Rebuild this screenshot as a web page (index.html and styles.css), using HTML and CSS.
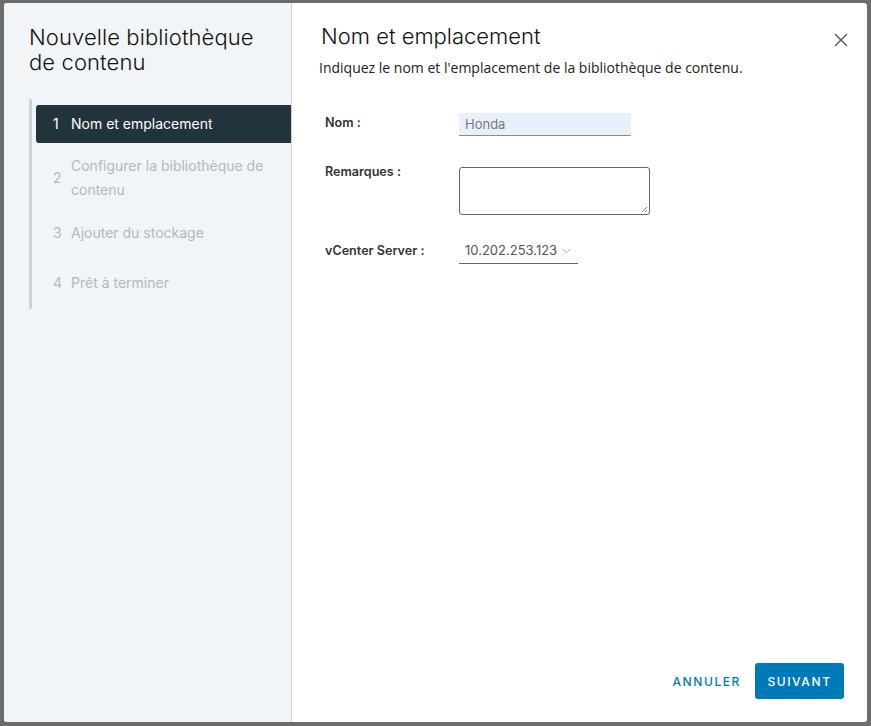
FILE: index.html
```html
<!DOCTYPE html>
<html lang="fr">
<head>
<meta charset="utf-8">
<title>Nouvelle bibliothèque de contenu</title>
<link rel="stylesheet" href="styles.css">
</head>
<body>
<div class="backdrop">
  <div class="modal">
    <aside class="side">
      <h1 class="side-title">Nouvelle bibliothèque de contenu</h1>
      <ol class="steps">
        <li class="step active"><span class="num">1</span><span class="lbl">Nom et emplacement</span></li>
        <li class="step multi"><span class="num">2</span><span class="lbl">Configurer la bibliothèque de contenu</span></li>
        <li class="step"><span class="num">3</span><span class="lbl">Ajouter du stockage</span></li>
        <li class="step last"><span class="num">4</span><span class="lbl">Prêt à terminer</span></li>
      </ol>
    </aside>
    <section class="main">
      <header class="head">
        <h2 class="title">Nom et emplacement</h2>
        <button class="close" aria-label="Fermer">
          <svg width="14" height="14" viewBox="0 0 14 14"><path d="M1 1 L13 13 M13 1 L1 13" stroke="#565656" stroke-width="1.4" fill="none"/></svg>
        </button>
      </header>
      <p class="desc">Indiquez le nom et l'emplacement de la bibliothèque de contenu.</p>
      <form class="form">
        <div class="row row-name">
          <label class="label">Nom :</label>
          <div class="input">Honda</div>
        </div>
        <div class="row row-notes">
          <label class="label">Remarques :</label>
          <div class="textarea">
            <svg class="grip" width="7" height="7" viewBox="0 0 7 7"><path d="M6 1 L1 6 M6 4 L4 6" stroke="#777" stroke-width="1"/></svg>
          </div>
        </div>
        <div class="row row-vc">
          <label class="label">vCenter Server :</label>
          <div class="select"><span>10.202.253.123</span>
            <svg width="9" height="6" viewBox="0 0 9 6"><path d="M0.5 0.8 L4.5 4.8 L8.5 0.8" stroke="#a3a3a3" stroke-width="1" fill="none"/></svg>
          </div>
        </div>
      </form>
      <footer class="foot">
        <button class="btn btn-link">ANNULER</button>
        <button class="btn btn-primary">SUIVANT</button>
      </footer>
    </section>
  </div>
</div>
</body>
</html>
```
FILE: styles.css
```css
* { box-sizing: border-box; }
html, body { margin: 0; padding: 0; }
body {
  background: #6c6c6c;
  font-family: Inter, "Noto Sans", sans-serif;
  color: #333;
  width: 871px;
  height: 726px;
  overflow: hidden;
}
.backdrop {
  padding: 3px 4px 4px 4px;
  height: 726px;
}
.modal {
  width: 863px;
  height: 719px;
  display: flex;
  background: #fff;
  border-radius: 3px;
  overflow: hidden;
}
.side {
  width: 288px;
  flex: none;
  background: #f1f5f8;
  border-right: 1px solid #ccd2d6;
  padding: 22px 0 0 25px;
}
.side-title {
  margin: 0;
  max-width: 240px;
  font-weight: 300;
  font-size: 22px;
  line-height: 25px;
  color: #111;
  letter-spacing: 0.1px;
}
.steps {
  list-style: none;
  margin: 24px 0 0 0;
  padding: 6px 0 2px 0;
  border-left: 3px solid #cdd3d7;
}
.step {
  display: flex;
  align-items: center;
  padding: 12px 0 12px 17px;
  margin-left: 4px;
  font-size: 14px;
  line-height: 24px;
  color: #b3b8bb;
}
.step .num { width: 18px; flex: none; }
.step .lbl { padding-right: 20px; }
.step.active {
  background: #21333b;
  color: #fff;
  border-radius: 3px 0 0 3px;
  padding-top: 7px;
  padding-bottom: 7px;
}
.step.multi { padding-top: 11px; padding-bottom: 7px; }
.step.last { padding-top: 14px; padding-bottom: 12px; }
.main {
  flex: 1;
  display: flex;
  flex-direction: column;
  padding: 19px 23px 23px 29px;
}
.head {
  display: flex;
  justify-content: space-between;
  align-items: center;
}
.title {
  margin: 0;
  font-weight: 300;
  font-size: 22px;
  line-height: 28px;
  color: #111;
}
.close {
  border: 0;
  background: none;
  padding: 0;
  margin: 7px -4px 0 0;
  width: 14px;
  height: 14px;
  display: flex;
}
.desc {
  margin: 9px 0 0 -2px;
  font-family: "Open Sans", "Noto Sans", sans-serif;
  font-size: 14px;
  line-height: 18px;
  color: #222;
}
.form {
  margin: 36px 0 0 4px;
  display: flex;
  flex-direction: column;
}
.row {
  display: flex;
  align-items: flex-start;
}
.label {
  width: 134px;
  flex: none;
  font-size: 12.6px;
  font-weight: 600;
  color: #333;
  line-height: 18px;
}
.row-name .label { padding-top: 1px; }
.input {
  width: 172px;
  height: 23px;
  background: #e8f0fc;
  border-bottom: 1px solid #8c8c8c;
  padding: 1px 6px 0;
  font-size: 13px;
  line-height: 20px;
  color: #777;
}
.row-notes { margin-top: 31px; }
.row-notes .label { margin-top: -4px; }
.textarea {
  width: 191px;
  height: 48px;
  border: 1px solid #666;
  border-radius: 3px;
  position: relative;
  background: #fff;
}
.grip { position: absolute; right: 1px; bottom: 1px; }
.row-vc { margin-top: 23px; }
.row-vc .label { padding-top: 4px; }
.select {
  width: 119px;
  display: flex;
  align-items: center;
  gap: 5px;
  padding: 3px 0 4px 6px;
  border-bottom: 1px solid #666;
  font-size: 13px;
  line-height: 18px;
  color: #555;
}
.select svg { margin-top: 1px; }
.foot {
  margin-top: auto;
  display: flex;
  justify-content: flex-end;
  align-items: center;
  gap: 13px;
}
.btn {
  font-family: Inter, "Noto Sans", sans-serif;
  font-size: 12px;
  font-weight: 500;
  letter-spacing: 1.6px;
  height: 36px;
  border-radius: 3px;
  border: 0;
  cursor: pointer;
}
.btn-link {
  background: none;
  color: #0079b8;
  padding: 0 1px;
}
.btn-primary {
  background: #0079b8;
  color: #fff;
  width: 89px;
  padding: 0;
}
```
